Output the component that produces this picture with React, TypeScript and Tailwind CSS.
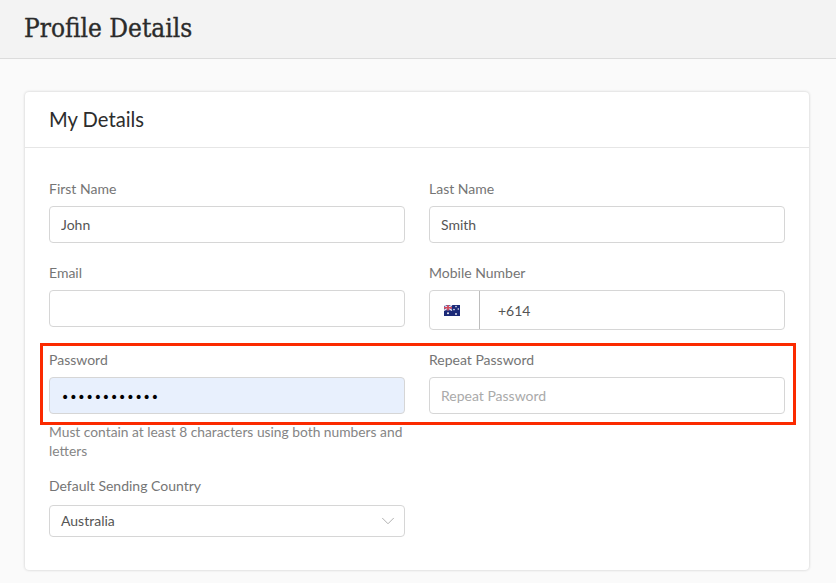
import { ChevronDown } from "lucide-react";

function Field({
  label,
  value,
  placeholder,
}: {
  label: string;
  value?: string;
  placeholder?: string;
}) {
  return (
    <div>
      <label className="mb-[7px] block h-5 text-sm leading-5 text-[#757575]">
        {label}
      </label>
      <input
        readOnly
        value={value}
        placeholder={placeholder}
        className="block h-[37px] w-full rounded border border-[#d6d6d6] bg-white px-[11px] text-sm text-[#555] outline-none placeholder:text-[#aaa]"
      />
    </div>
  );
}

function AuFlag() {
  return (
    <svg width="16" height="11" viewBox="0 0 16 11">
      <rect width="16" height="11" fill="#1b2a78" />
      <rect width="8" height="5.5" fill="#5a5f9c" />
      <path d="M0 0l8 5.5M8 0L0 5.5" stroke="#e8e8f2" strokeWidth="1.2" />
      <path d="M4 0v5.5M0 2.75h8" stroke="#d8485a" strokeWidth="1.6" />
      <circle cx="4" cy="8.3" r="1" fill="#f2f2f8" />
      <circle cx="12" cy="1.6" r="0.8" fill="#f2f2f8" />
      <circle cx="14.3" cy="4" r="0.8" fill="#f2f2f8" />
      <circle cx="10" cy="4.6" r="0.8" fill="#f2f2f8" />
      <circle cx="12" cy="9" r="0.9" fill="#f2f2f8" />
    </svg>
  );
}

export default function App() {
  return (
    <div className="relative h-[583px] w-[836px] overflow-hidden bg-[#fafafa] font-['Lato',sans-serif]">
      <header className="flex h-[59px] items-center border-b border-[#dcdcdc] bg-[#f3f3f3] px-6 pb-[3px]">
        <h1 className="font-['DejaVu_Serif_Condensed','DejaVu_Serif',serif] text-[26px] leading-none text-[#2b2b2b] [-webkit-text-stroke:0.35px_#2b2b2b]">
          Profile Details
        </h1>
      </header>

      <main className="px-[25px] pt-[33px]">
        <section className="h-[478px] w-[784px] rounded bg-white shadow-[0_0_3px_rgba(0,0,0,0.2)]">
          <div className="flex h-[56px] items-center border-b border-[#e6e6e6] px-6 pb-[1px]">
            <h2 className="text-[20.2px] text-[#2d2d2d]">My Details</h2>
          </div>

          <div className="grid grid-cols-2 items-start gap-x-6 gap-y-5 px-6 pt-[31px]">
            <Field label="First Name" value="John" />
            <Field label="Last Name" value="Smith" />
            <Field label="Email" value="" />
            <div>
              <label className="mb-[7px] block h-5 text-sm leading-5 text-[#757575]">
                Mobile Number
              </label>
              <div className="flex h-10 w-full rounded border border-[#d6d6d6] bg-white">
                <div className="flex w-[50px] items-center justify-start border-r border-[#bdbdbd] pl-[14px]">
                  <AuFlag />
                </div>
                <div className="flex items-center pl-[18px] pt-[2px] text-sm text-[#555]">
                  +614
                </div>
              </div>
            </div>
            <div>
              <label className="mb-[7px] block h-5 text-sm leading-5 text-[#757575]">
                Password
              </label>
              <div className="flex h-[37px] w-full items-center rounded border border-[#d6d6d6] bg-[#e8f0fd] px-[11px] pt-[2px]">
                <span className="font-['DejaVu_Sans',sans-serif] text-[14px] leading-none tracking-[-0.1px] text-black">
                  ••••••••••••
                </span>
              </div>
              <p className="mt-[8px] text-[13.8px] leading-[19px] text-[#858585]">
                Must contain at least 8 characters using both numbers and
                letters
              </p>
            </div>
            <Field label="Repeat Password" placeholder="Repeat Password" />
          </div>

          <div className="w-[404px] px-6 pt-[16px]">
            <label className="mb-[9px] block h-5 text-sm leading-5 text-[#757575]">
              Default Sending Country
            </label>
            <div className="flex h-8 w-full items-center justify-between rounded border border-[#d6d6d6] bg-white pl-[11px] pr-[5px] text-sm text-[#555]">
              <span>Australia</span>
              <ChevronDown size={22} strokeWidth={1} className="text-[#aaa]" />
            </div>
          </div>
        </section>
      </main>

      <div className="absolute left-10 top-[343px] h-[82px] w-[756px] border-[3px] border-[#fb2a00]" />
    </div>
  );
}
